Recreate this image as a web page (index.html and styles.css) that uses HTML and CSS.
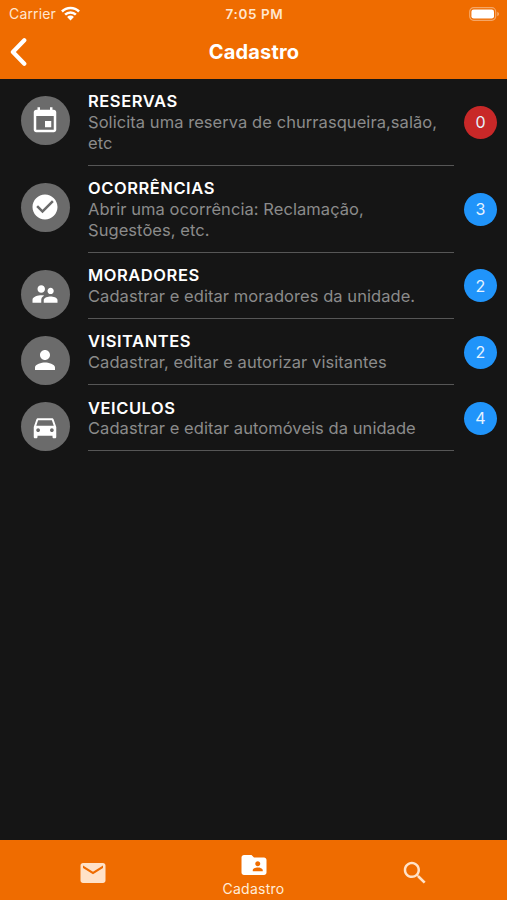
FILE: index.html
```html
<!DOCTYPE html>
<html lang="pt-BR">
<head>
    <meta charset="UTF-8">
    <meta name="viewport" content="width=device-width, initial-scale=1.0">
    <title>Cadastro</title>
    <link rel="stylesheet" href="styles.css">
</head>
<body>
    <header class="topo">
        <div class="status">
            <div class="operadora">
                <span>Carrier</span>
                <svg class="wifi" viewBox="0 0 18 14">
                    <path d="M.9 5.1a11.4 11.4 0 0 1 16.2 0M3.9 8.1a7.2 7.2 0 0 1 10.2 0" fill="none" stroke="#fff" stroke-width="2.4"/>
                    <path d="M9 13.6 5.8 10.3a4.5 4.5 0 0 1 6.4 0z" fill="#fff"/>
                </svg>
            </div>
            <span class="hora">7:05 PM</span>
            <svg class="bateria" viewBox="0 0 31 14">
                <rect x=".7" y=".7" width="26" height="12.6" rx="4" fill="none" stroke="#fff" stroke-opacity=".4" stroke-width="1.2"/>
                <rect x="2.4" y="2.4" width="22.6" height="9.2" rx="2.3" fill="#fff"/>
                <path d="M28.4 4.8c2 .8 2 3.6 0 4.4z" fill="#fff" fill-opacity=".5"/>
            </svg>
        </div>
        <div class="barra">
            <a class="voltar" href="#">
                <svg viewBox="0 0 18 30"><path d="M14.3 3.3 2.9 15l11.4 11.7" fill="none" stroke="#fff" stroke-width="4.2" stroke-linecap="round" stroke-linejoin="round"/></svg>
            </a>
            <h1>Cadastro</h1>
        </div>
    </header>

    <main class="lista">
        <div class="item">
            <div class="avatar">
                <svg viewBox="0 0 24 24"><path d="M17 12h-5v5h5v-5zM16 1v2H8V1H6v2H5c-1.11 0-1.99.9-1.99 2L3 19c0 1.1.89 2 2 2h14c1.1 0 2-.9 2-2V5c0-1.1-.9-2-2-2h-1V1h-2zm3 18H5V8h14v11z"/></svg>
            </div>
            <div class="texto">
                <h2>RESERVAS</h2>
                <p>Solicita uma reserva de churrasqueira,salão, etc</p>
            </div>
            <span class="contador vermelho">0</span>
        </div>
        <div class="item">
            <div class="avatar">
                <svg viewBox="0 0 24 24"><path d="M12 2C6.48 2 2 6.48 2 12s4.48 10 10 10 10-4.48 10-10S17.52 2 12 2zm-2 15l-5-5 1.41-1.41L10 14.17l7.59-7.59L19 8l-9 9z"/></svg>
            </div>
            <div class="texto">
                <h2>OCORRÊNCIAS</h2>
                <p>Abrir uma ocorrência: Reclamação, Sugestões, etc.</p>
            </div>
            <span class="contador">3</span>
        </div>
        <div class="item">
            <div class="avatar">
                <svg viewBox="0 0 24 24"><path d="M16.5 12c1.38 0 2.49-1.12 2.49-2.5S17.88 7 16.5 7C15.12 7 14 8.12 14 9.5s1.12 2.5 2.5 2.5zM9 11c1.66 0 2.99-1.34 2.99-3S10.66 5 9 5C7.34 5 6 6.34 6 8s1.34 3 3 3zm7.5 3c-1.83 0-5.5.92-5.5 2.75V19h11v-2.25c0-1.83-3.67-2.75-5.5-2.75zM9 13c-2.33 0-7 1.17-7 3.5V19h7v-2.25c0-.85.33-2.34 2.37-3.47C10.5 13.1 9.66 13 9 13z"/></svg>
            </div>
            <div class="texto">
                <h2>MORADORES</h2>
                <p>Cadastrar e editar moradores da unidade.</p>
            </div>
            <span class="contador">2</span>
        </div>
        <div class="item">
            <div class="avatar">
                <svg viewBox="0 0 24 24"><path d="M12 12c2.21 0 4-1.79 4-4s-1.79-4-4-4-4 1.79-4 4 1.79 4 4 4zm0 2c-2.67 0-8 1.34-8 4v2h16v-2c0-2.66-5.33-4-8-4z"/></svg>
            </div>
            <div class="texto">
                <h2>VISITANTES</h2>
                <p>Cadastrar, editar e autorizar visitantes</p>
            </div>
            <span class="contador">2</span>
        </div>
        <div class="item">
            <div class="avatar">
                <svg viewBox="0 0 24 24"><path d="M18.92 6.01C18.72 5.42 18.16 5 17.5 5h-11c-.66 0-1.21.42-1.42 1.01L3 12v8c0 .55.45 1 1 1h1c.55 0 1-.45 1-1v-1h12v1c0 .55.45 1 1 1h1c.55 0 1-.45 1-1v-8l-2.08-5.99zM6.5 16c-.83 0-1.5-.67-1.5-1.5S5.67 13 6.5 13s1.5.67 1.5 1.5S7.33 16 6.5 16zm11 0c-.83 0-1.5-.67-1.5-1.5s.67-1.5 1.5-1.5 1.5.67 1.5 1.5-.67 1.5-1.5 1.5zM5 11l1.5-4.5h11L19 11H5z"/></svg>
            </div>
            <div class="texto">
                <h2>VEICULOS</h2>
                <p>Cadastrar e editar automóveis da unidade</p>
            </div>
            <span class="contador">4</span>
        </div>
    </main>

    <nav class="abas">
        <a class="aba" href="#">
            <svg viewBox="0 0 24 24"><path d="M20 4H4c-1.1 0-1.99.9-1.99 2L2 18c0 1.1.9 2 2 2h16c1.1 0 2-.9 2-2V6c0-1.1-.9-2-2-2zm0 4l-8 5-8-5V6l8 5 8-5v2z"/></svg>
        </a>
        <a class="aba ativa" href="#">
            <svg viewBox="0 0 24 24"><path d="M20 6h-8l-2-2H4c-1.1 0-1.99.9-1.99 2L2 18c0 1.1.9 2 2 2h16c1.1 0 2-.9 2-2V8c0-1.1-.9-2-2-2zm-5 3c1.1 0 2 .9 2 2s-.9 2-2 2-2-.9-2-2 .9-2 2-2zm4 8h-8v-1c0-1.33 2.67-2 4-2s4 .67 4 2v1z"/></svg>
            <span>Cadastro</span>
        </a>
        <a class="aba" href="#">
            <svg viewBox="0 0 24 24"><path d="M15.5 14h-.79l-.28-.27C15.41 12.59 16 11.11 16 9.5 16 5.91 13.09 3 9.5 3S3 5.91 3 9.5 5.91 16 9.5 16c1.61 0 3.09-.59 4.23-1.57l.27.28v.79l5 4.99L20.49 19l-4.99-5zm-6 0C7.01 14 5 11.99 5 9.5S7.01 5 9.5 5 14 7.01 14 9.5 11.99 14 9.5 14z"/></svg>
        </a>
    </nav>
</body>
</html>
```

FILE: styles.css
```css
* {
    box-sizing: border-box;
}

body {
    display: flex;
    flex-direction: column;
    height: 100vh;
    margin: 0;
    background-color: #151515;
    font-family: Inter, "Liberation Sans", sans-serif;
    color: #fff;
}

h1, h2, p {
    margin: 0;
}

svg {
    display: block;
    fill: currentColor;
}

a {
    color: inherit;
    text-decoration: none;
}

.topo {
    height: 79px;
    background-color: #ef6c00;
}

.status {
    display: grid;
    grid-template-columns: 1fr auto 1fr;
    align-items: center;
    height: 27px;
    padding: 0 7px 0 9px;
    font-size: 14px;
    color: #ffe6cf;
}

.operadora {
    display: flex;
    align-items: center;
    gap: 5px;
    letter-spacing: 0.15px;
}

.wifi {
    width: 19px;
    height: 15px;
}

.hora {
    font-size: 13.5px;
    font-weight: 600;
    letter-spacing: 0.6px;
}

.bateria {
    justify-self: end;
    width: 31px;
    height: 14px;
}

.barra {
    display: grid;
    grid-template-columns: 1fr auto 1fr;
    align-items: center;
    height: 49px;
    padding: 0 10px;
}

.voltar svg {
    width: 18px;
    height: 30px;
}

.barra h1 {
    padding-left: 1px;
    font-size: 20px;
    font-weight: 700;
    letter-spacing: 0.2px;
}

.lista {
    flex: 1;
}

.item {
    display: flex;
    padding: 0 10px 0 21px;
}

.avatar {
    display: flex;
    align-items: center;
    justify-content: center;
    width: 49px;
    height: 49px;
    margin-top: 17px;
    padding-right: 2px;
    border-radius: 50%;
    background-color: #6b6b6b;
}

.avatar svg {
    width: 30px;
    height: 30px;
}

.texto {
    width: 366px;
    margin: 0 10px 0 18px;
    padding: 12.4px 0 11.4px;
    border-bottom: 1px solid #565656;
}

.texto h2 {
    font-size: 16.5px;
    font-weight: 600;
    line-height: 20.7px;
    letter-spacing: 0.55px;
}

.texto p {
    padding-right: 10px;
    font-size: 16.5px;
    line-height: 20.7px;
    letter-spacing: 0.06px;
    color: #8b8b8b;
}

.contador {
    display: flex;
    align-items: center;
    justify-content: center;
    align-self: center;
    width: 33px;
    height: 33px;
    border-radius: 50%;
    background-color: #2094fa;
    font-size: 16px;
    color: #e6f3ff;
}

.vermelho {
    background-color: #c82828;
}

.abas {
    display: grid;
    grid-template-columns: 93px 1fr 93px;
    height: 60px;
    padding: 0 46px;
    background-color: #ef6c00;
}

.aba {
    display: flex;
    flex-direction: column;
    align-items: center;
    padding-top: 18px;
    color: #ffe2c8;
}

.aba svg {
    width: 30px;
    height: 30px;
}

.ativa {
    padding-top: 10px;
    color: #fff;
}

.aba span {
    font-size: 14px;
    line-height: 17px;
    letter-spacing: 0.25px;
    color: #ffecd9;
}
```
